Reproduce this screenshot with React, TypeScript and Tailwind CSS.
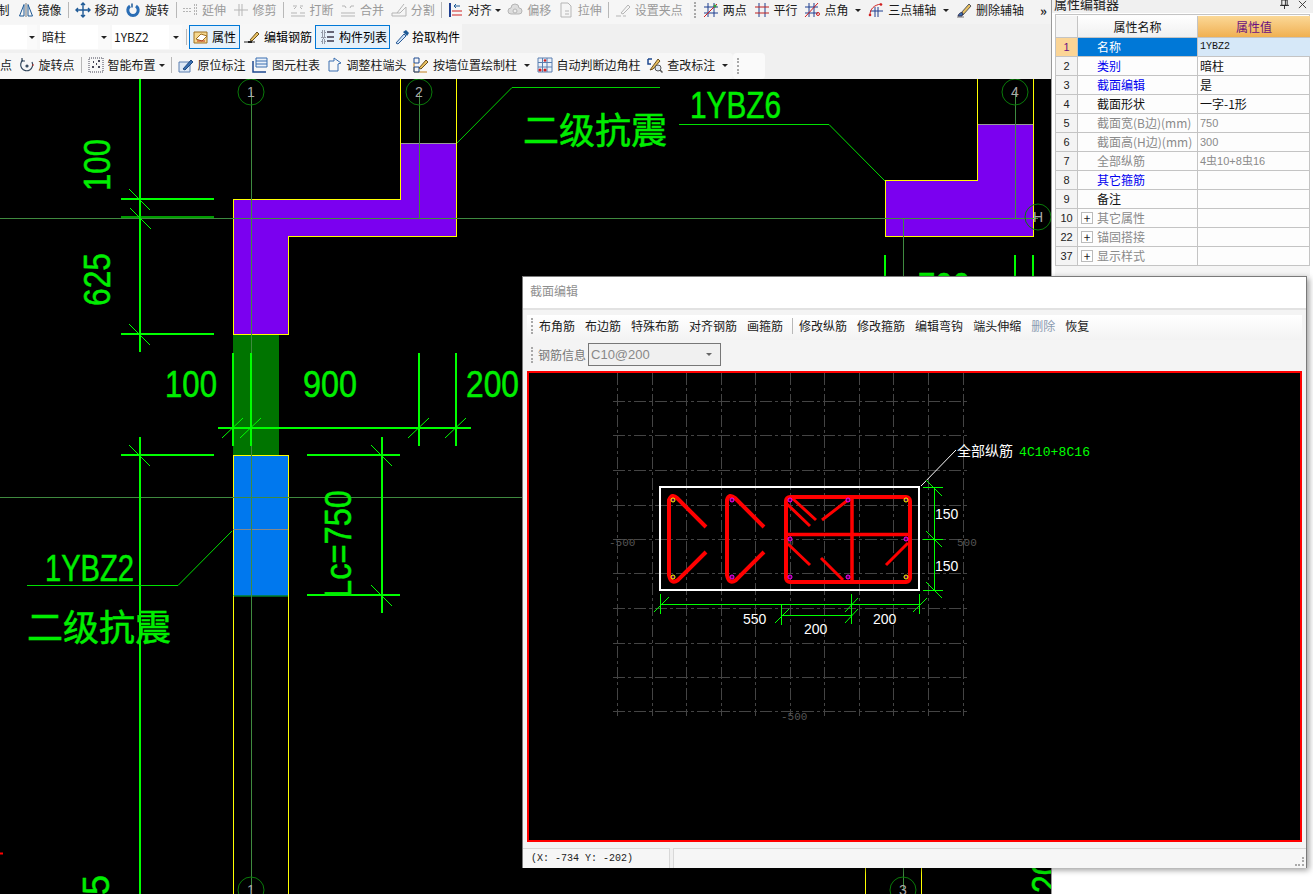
import type { JSX } from 'react'

type IconName =
    | 'mirror' | 'move' | 'rotate' | 'extend' | 'trim' | 'break' | 'merge' | 'split' | 'align'
    | 'offset' | 'stretch' | 'grip' | 'twoPoint' | 'parallel' | 'pointAngle' | 'threeAxis' | 'delAxis'
    | 'prop' | 'edit' | 'list' | 'pick' | 'rotPoint' | 'smart' | 'origin' | 'table' | 'adjust'
    | 'wall' | 'auto' | 'check'

const icons: Record<IconName, JSX.Element> = {
    mirror: <g fill="none" stroke="#1f5a96"><path d="M1.5 14 6 2.5V14zM14.5 14 10 2.5V14z" /><path d="M8 1v14" stroke="#777" /></g>,
    move: <g fill="none" stroke="#1f5a96" strokeWidth="1.4"><path d="M8 1v14M1 8h14M6 3l2-2 2 2M6 13l2 2 2-2M3 6 1 8l2 2M13 6l2 2-2 2" /></g>,
    rotate: <g fill="none" stroke="#2a6db5" strokeWidth="3"><path d="M5 4a5.2 5.2 0 1 0 6 0" /><path d="M7 1.5v4" strokeWidth="1.5" stroke="#1f5a96" /></g>,
    extend: <g fill="none" stroke="#b5b5b5"><path d="M1 6.5h9M1 9.5h9M12.5 2v12M14.5 2v12" strokeDasharray="2 1" /></g>,
    trim: <g fill="none" stroke="#b5b5b5"><path d="M1 8h14M6 2v12M9 2v12" /></g>,
    break: <g fill="none" stroke="#b5b5b5"><path d="M1 11h6M10 11h5M1 14h14M3 4h4M10 4h3M4 7l2-2M12 7l-2-2" /></g>,
    merge: <g fill="none" stroke="#b5b5b5"><path d="M1 11h14M1 14h14M2 4h3M11 4h3M6 6l-1-2M10 6l1-2" /></g>,
    split: <g fill="none" stroke="#b5b5b5"><path d="M1 14h14v-9L9 11H1zM13 2l-7 9" /></g>,
    align: <g fill="none"><path d="M2 1v14" stroke="#1f3f90" strokeWidth="2" /><path d="M4 13h10M4 9h10" stroke="#d02020" /><path d="M12 4H6M8 2 6 4l2 2" stroke="#1f5a96" /></g>,
    offset: <g fill="#ddd" stroke="#b5b5b5"><path d="M4 12a3 3 0 0 1 0-6 4 4 0 0 1 8 0 3 3 0 0 1 0 6z" /><circle cx="8" cy="9" r="2" fill="#eee" /></g>,
    stretch: <g fill="#f5f5f5" stroke="#b5b5b5"><path d="M3 1h7l3 3v11H3z" /><path d="M7 9h4M7 12h4" /></g>,
    grip: <g fill="none" stroke="#b5b5b5"><path d="M1 14h5M8 14h3M6 11l7-8 2 2-7 7z" /></g>,
    twoPoint: <g fill="none"><path d="M5 1v14M11 1v14M1 5h14M1 11h14" stroke="#1f3f90" /><path d="M1 15 14 2" stroke="#d02020" /><circle cx="12" cy="4" r="1.6" fill="#3a9a3a" /></g>,
    parallel: <g fill="none"><path d="M5 1v14M11 1v14" stroke="#1f3f90" /><path d="M1 5h14M1 11h14" stroke="#c02020" /></g>,
    pointAngle: <g fill="none"><path d="M5 1v14M10 1v14M1 5h13M1 11h13" stroke="#1f3f90" /><path d="M1 15 14 1" stroke="#d02020" /><circle cx="14" cy="12" r="1.5" stroke="#d02020" /></g>,
    threeAxis: <g fill="none"><path d="M7 5v10M10 5v10M2 9h13" stroke="#1f3f90" /><path d="M2 13C2 7 6 3 13 2" stroke="#d02020" /><circle cx="13" cy="2.5" r="1.3" fill="#d02020" /><circle cx="2" cy="13" r="1.3" fill="#d02020" /></g>,
    delAxis: <g fill="none"><path d="M1 15h7" stroke="#777" /><path d="M5 11 13 2l2 2-8 9z" fill="#e8c060" stroke="#555" /><path d="M2 14c1-3 3-4 5-3l-1 3z" fill="#3a6fb0" stroke="#335" /></g>,
    prop: <g stroke="#a07020"><path d="M1 3h13v11H1z" fill="#f5d890" /><path d="M3 10 8 5l6 2-5 5z" fill="#fff" /><path d="M4 12h8" stroke="#c03020" /></g>,
    edit: <g fill="none"><path d="M0 13h11" stroke="#222" /><path d="M6 11 13 3l2 2-7 7z" fill="#e8c060" stroke="#6a5020" /><path d="M4 13h4" stroke="#222" strokeWidth="2" /></g>,
    list: <g fill="none" stroke="#445"><path d="M2 2h3v3H2zM2 7h3v2H2zM2 11h3v3H2z" strokeDasharray="1 1" /><path d="M7 3h7M7 8h7M7 12h7" stroke="#667" strokeWidth="2" /></g>,
    pick: <g fill="none"><path d="M2 14 10 5l2 2-8 8z" fill="#cfe3f7" stroke="#2a5a96" /><path d="M9 3l4 4 2-3-3-3z" fill="#1f5a96" /></g>,
    rotPoint: <g fill="none" stroke="#34495e" strokeWidth="1.2"><path d="M4 3a6 6 0 1 0 9 2" /><path d="M3 1v3h3" /><circle cx="8" cy="9" r="1" fill="#34495e" /><path d="M13 8h2" stroke="#c03020" /></g>,
    smart: <g fill="none" stroke="#445"><path d="M1 1h14v14H1z" strokeDasharray="1 1" /><path d="M5 5h1M10 4h2M4 10h2M10 10h2M8 7h1" strokeWidth="2" /></g>,
    origin: <g fill="none"><path d="M1 5h11v10H1z" fill="#dfe9f5" stroke="#5a7fb0" /><path d="M5 12l8-9 2 2-8 8z" fill="#3a6fb0" stroke="#1f4a80" /></g>,
    table: <g fill="none"><path d="M4 1h11v9H4z" stroke="#3a6fb0" fill="#eaf1fa" /><path d="M4 4h11M4 7h11" stroke="#3a6fb0" /><path d="M1 4v11h13" stroke="#1f4a90" strokeWidth="1.5" /></g>,
    adjust: <g fill="#f7f7f7" stroke="#3a6fb0"><path d="M2 4h5V1l7 5-3 1v7H2z" /></g>,
    wall: <g fill="none"><path d="M1 1h5v5H1z" stroke="#1f4a90" /><path d="M1 6v9h13" stroke="#c08020" /><path d="M1 10h5v5H1z" stroke="#1f4a90" /><path d="M6 11l7-8 2 2-7 7z" fill="#e8c060" stroke="#6a5020" /></g>,
    auto: <g fill="#eaf1fa" stroke="#5a7fb0"><path d="M1 1h14v14H1z" /><path d="M1 5.5h14M1 10h14M5.5 1v14M10 1v14" fill="none" /><circle cx="8" cy="3.5" r="1.3" fill="#d02020" stroke="none" /><circle cx="3" cy="13" r="1.6" fill="#d02020" stroke="none" /><circle cx="8" cy="13" r="1.6" fill="#d02020" stroke="none" /></g>,
    check: <g fill="none"><path d="M1 2h4M1 2v5h3" stroke="#1f4a90" strokeWidth="1.5" /><path d="M3 13 11 2l2 2-7 8z" fill="#e8c060" stroke="#6a5020" /><circle cx="11" cy="11" r="3" fill="#dfe9f5" stroke="#555" /><path d="m13 13 2.5 2.5" stroke="#555" strokeWidth="1.5" /></g>,
}

const Ico = ({ name }: { name: IconName }) => (
    <svg viewBox="0 0 16 16" className="w-4 h-4 shrink-0">
        {icons[name]}
    </svg>
)

const Caret = ({ tight }: { tight?: boolean }) => (
    <span className={tight ? 'w-[5px] flex justify-center' : 'ml-[2px] w-[7px] flex justify-center'}>
        <span className="border-x-[3px] border-x-transparent border-t-[3px] border-t-[#222]" />
    </span>
)

interface ToolProps {
    icon?: IconName
    label: string
    caret?: 'tight' | 'wide'
    disabled?: boolean
}

const Tool = ({ icon, label, caret, disabled }: ToolProps) => (
    <div className={`flex items-center gap-1 shrink-0 ${disabled ? 'text-[#9a9a9a]' : 'text-[#1a1a1a]'}`}>
        {icon && <Ico name={icon} />}
        <span>{label}</span>
        {caret && <Caret tight={caret === 'tight'} />}
    </div>
)

const Sep = () => <div className="w-px h-[16px] bg-[#b8b8b8] -mr-px shrink-0" />

const Grip = () => (
    <div className="w-[2px] h-[16px] shrink-0 border-l-2 border-dotted border-l-[#a8a8a8]" />
)

const rowOneLeft: (ToolProps | 'sep')[] = [
    { icon: 'mirror', label: '镜像' },
    'sep',
    { icon: 'move', label: '移动' },
    { icon: 'rotate', label: '旋转' },
    'sep',
    { icon: 'extend', label: '延伸', disabled: true },
    { icon: 'trim', label: '修剪', disabled: true },
    'sep',
    { icon: 'break', label: '打断', disabled: true },
    { icon: 'merge', label: '合并', disabled: true },
    { icon: 'split', label: '分割', disabled: true },
    'sep',
    { icon: 'align', label: '对齐', caret: 'tight' },
    { icon: 'offset', label: '偏移', disabled: true },
    { icon: 'stretch', label: '拉伸', disabled: true },
    'sep',
    { icon: 'grip', label: '设置夹点', disabled: true },
]

const rowOneRight: ToolProps[] = [
    { icon: 'twoPoint', label: '两点' },
    { icon: 'parallel', label: '平行' },
    { icon: 'pointAngle', label: '点角', caret: 'wide' },
    { icon: 'threeAxis', label: '三点辅轴', caret: 'wide' },
    { icon: 'delAxis', label: '删除辅轴' },
]

const rowThree: (ToolProps | 'sep')[] = [
    { label: '点' },
    { icon: 'rotPoint', label: '旋转点' },
    'sep',
    { icon: 'smart', label: '智能布置', caret: 'tight' },
    'sep',
    { icon: 'origin', label: '原位标注' },
    { icon: 'table', label: '图元柱表' },
    { icon: 'adjust', label: '调整柱端头' },
    { icon: 'wall', label: '按墙位置绘制柱', caret: 'wide' },
    { icon: 'auto', label: '自动判断边角柱' },
    { icon: 'check', label: '查改标注', caret: 'wide' },
]

const Combo = ({ text, field, width }: { text: string; field: string; width: string }) => (
    <div className={`flex h-[24px] shrink-0 ${width}`}>
        <div className={`${field} bg-white pl-[2px] flex items-center text-[#1a1a1a]`}>{text}</div>
        <div className="flex-1 bg-[#fafafa] flex items-center justify-center">
            <span className="border-x-[3px] border-x-transparent border-t-[3px] border-t-[#222]" />
        </div>
    </div>
)

const Toolbars = () => (
    <div className="bg-[#f0f0f0] text-[12px] leading-none shrink-0">
        <div className="h-[24px] flex items-center overflow-hidden">
            <div className="w-[690px] h-full pb-[4px] bg-[#f6f6f6] flex items-center gap-[6.5px] shrink-0">
                <span className="-ml-[2.5px] mr-[1.5px] text-[#1a1a1a]">制</span>
                {rowOneLeft.map((item, idx) =>
                    item === 'sep' ? <Sep key={idx} /> : <Tool key={idx} {...item} />,
                )}
            </div>
            <div className="flex-1 h-full pb-[4px] flex items-center gap-[6.8px] pl-[4px] bg-[#f3f3f3]">
                <Grip />
                {rowOneRight.map((item) => (
                    <Tool key={item.label} {...item} />
                ))}
                <span className="ml-auto mr-[4px] text-[13px] font-bold text-[#222]">»</span>
            </div>
        </div>
        <div className="h-[28px] pb-[2px] flex items-center">
            <div className="w-[462px] h-full bg-[#f7f7f7] flex items-center">
                <Combo text="" field="w-[27px]" width="w-[37px]" />
                <div className="w-[3px]" />
                <Combo text="暗柱" field="w-[58px]" width="w-[70px]" />
                <div className="w-[2px]" />
                <Combo text="1YBZ2" field="w-[57px]" width="w-[70px]" />
                <div className="w-px h-[16px] bg-[#b8b8b8] ml-[4px] mr-[2px]" />
                <div className="w-[51px] h-[24px] border border-[#0078d7] bg-[#e5f1fb] flex items-center gap-[3px] pl-[3px]">
                    <Ico name="prop" />
                    <span>属性</span>
                </div>
                <div className="ml-[4px] w-[68px] flex items-center gap-[4px]">
                    <Ico name="edit" />
                    <span>编辑钢筋</span>
                </div>
                <div className="ml-[3px] w-[75px] h-[24px] border border-[#0078d7] bg-[#e5f1fb] flex items-center gap-[3px] pl-[4px]">
                    <Ico name="list" />
                    <span>构件列表</span>
                </div>
                <div className="ml-[4px] flex items-center gap-[2px]">
                    <Ico name="pick" />
                    <span>拾取构件</span>
                </div>
            </div>
        </div>
        <div className="h-[27px] pt-px flex items-center">
            <div className="w-[733px] h-full pb-[2px] bg-[#f7f7f7] flex items-center gap-[6.5px] overflow-hidden shrink-0 rounded-r-sm">
                {rowThree.map((item, idx) =>
                    item === 'sep' ? <Sep key={idx} /> : <Tool key={idx} {...item} />,
                )}
            </div>
            <div className="w-[32px] h-full bg-[#fafafa] flex items-center pl-[4px] rounded-sm">
                <Grip />
            </div>
        </div>
    </div>
)

const GREEN = '#00ee00'
const AXIS = '#3f8a3f'

const Bubble = ({ x, y, label }: { x: number; y: number; label: string }) => (
    <g>
        <circle cx={x} cy={y} r={13} fill="none" stroke="#0a7a0a" />
        <text x={x} y={y + 5} fontSize={14} fill="#aaaaaa" textAnchor="middle" style={{ fontFamily: 'Liberation Sans' }}>{label}</text>
    </g>
)

const Thick = ({ d }: { d: string }) => <path d={d} stroke="#00ff00" strokeWidth={2} fill="none" shapeRendering="crispEdges" />

const Slash = ({ x, y, up }: { x: number; y: number; up?: boolean }) => (
    <path
        d={up ? `M${x - 11} ${y + 10}L${x + 10} ${y - 10}` : `M${x - 11} ${y - 10}L${x + 10} ${y + 11}`}
        stroke="#00ff00"
        fill="none"
    />
)

const DimText = ({ x, y, w, rotate, children }: { x: number; y: number; w: number; rotate?: boolean; children: string }) => (
    <text
        transform={`translate(${x} ${y})${rotate ? ' rotate(-90)' : ''}`}
        fontSize={36}
        fill={GREEN}
        stroke={GREEN}
        strokeWidth={0.5}
        textLength={w}
        lengthAdjust="spacingAndGlyphs"
        style={{ fontFamily: 'Liberation Sans' }}
    >
        {children}
    </text>
)

const MainCanvas = () => (
    <svg viewBox="0 79 1051 815" className="flex-1 block w-[1051px] bg-black min-h-0">
        <path d="M233 335h46v120h-46z" fill="#007400" />
        <path d="M233.500 199.500H400.500V143.500H456.500V236.500H288.500V334.500H233.500Z" fill="#7b00f0" stroke="#ffff00" shapeRendering="crispEdges" />
        <path d="M885.500 180.500H977.500V124.500H1033.500V236.500H885.500Z" fill="#7b00f0" stroke="#ffff00" shapeRendering="crispEdges" />
        <path d="M401 143.500h55M978 124.500h55" stroke="#999" shapeRendering="crispEdges" />
        <path d="M400.500 79v64M456.500 79v64M977.500 79v45M1033.500 79v45" stroke="#ffff00" shapeRendering="crispEdges" />
        <path d="M233 455.500h55V595.500h-55z" fill="#0078ee" />
        <path d="M233.500 596V455.500H288.500V596" stroke="#ffff00" fill="none" shapeRendering="crispEdges" />
        <path d="M233 596h55" stroke="#00c040" />
        <path d="M233.500 596V894M288.500 596V894M865.500 868V894M921.500 868V894" stroke="#ffff00" shapeRendering="crispEdges" />
        <path d="M233 529.500h55" stroke="#888" />

        <path d="M0 218.500H1038M0 497.500H522M251.500 92V890M419.500 92V218M1015.500 92V218M903.500 218V276M903.500 868V890" stroke={AXIS} shapeRendering="crispEdges" />

        <Bubble x={251} y={92} label="1" />
        <Bubble x={419} y={92} label="2" />
        <Bubble x={1015} y={92} label="4" />
        <Bubble x={1038} y={217} label="H" />
        <Bubble x={251} y={890} label="1" />
        <Bubble x={903} y={890} label="3" />

        <Thick d="M140 79V352M121 199H214M121 334H214M140 437V894M121 455H214M307 455H400M307 595H400M382 437V613" />
        <path d="M121 217H214" stroke="#00d000" strokeWidth={1.5} />
        <Thick d="M233 353V446M251 353V446M419 353V446M456 353V446M218 428H471M885 255V276M1015 255V276M1033 255V276" />
        <Slash x={140} y={199} />
        <Slash x={141} y={218} />
        <Slash x={140} y={334} />
        <Slash x={140} y={455} />
        <Slash x={382} y={455} />
        <Slash x={382} y={595} />
        <Slash x={233} y={428} up />
        <Slash x={251} y={428} up />
        <Slash x={419} y={428} up />
        <Slash x={456} y={428} up />

        <DimText x={110} y={191} w={52} rotate>100</DimText>
        <DimText x={110} y={306} w={53} rotate>625</DimText>
        <DimText x={165} y={397} w={52}>100</DimText>
        <DimText x={303} y={397} w={54}>900</DimText>
        <DimText x={466} y={397} w={53}>200</DimText>
        <DimText x={918} y={299} w={52}>700</DimText>
        <DimText x={351} y={598} w={108} rotate>Lc=750</DimText>
        <DimText x={109} y={895} w={20} rotate>5</DimText>
        <DimText x={1058} y={893} w={53} rotate>200</DimText>
        <DimText x={690} y={118} w={91}>1YBZ6</DimText>
        <DimText x={45} y={581} w={89}>1YBZ2</DimText>
        <text x={523} y={144} fontSize={36} fill={GREEN} stroke={GREEN} strokeWidth={0.5}>二级抗震</text>
        <text x={27} y={641} fontSize={36} fill={GREEN} stroke={GREEN} strokeWidth={0.5}>二级抗震</text>
        <path d="M457 143 512 87.500H660" stroke="#00d000" fill="none" />
        <path d="M679 124.500H829L885 181" stroke="#00e000" fill="none" />
        <path d="M27 585.500H178L232 531" stroke="#00e000" fill="none" />
        <path d="M0 853.500H3" stroke="#ff0000" strokeWidth={2} />
    </svg>
)

const SecText = ({ x, y, children, fill = '#ffffff' }: { x: number; y: number; children: string; fill?: string }) => (
    <text x={x} y={y} fontSize={14} fill={fill} style={{ fontFamily: 'Liberation Sans' }}>{children}</text>
)

const gridXs = [617, 652, 686, 721, 755, 790, 824, 859, 893, 928, 963]
const gridYs = [400, 434, 469, 504, 538, 572, 607, 642, 676, 710]
const rebarDots = [
    [673, 499, '#ffff00'], [673, 576, '#ffff00'], [732, 499, '#ff00ff'], [732, 576, '#ff00ff'],
    [790, 499, '#ff00ff'], [848, 499, '#ff00ff'], [906, 499, '#ffff00'], [790, 538, '#ff00ff'],
    [906, 538, '#ff00ff'], [790, 576, '#ff00ff'], [848, 576, '#ff00ff'], [906, 576, '#ffff00'],
] as [number, number, string][]

const SectionCanvas = () => (
    <svg viewBox="529 372 771 467" className="block w-full h-full bg-black">
        {gridXs.map((x) => (
            <path key={x} d={`M${x + 0.5} 372V715`} stroke="#444444" strokeDasharray="12 3 3 3" shapeRendering="crispEdges" />
        ))}
        {gridYs.map((y) => (
            <path key={y} d={`M613 ${y + 0.5}H968`} stroke="#444444" strokeDasharray="12 3 3 3" shapeRendering="crispEdges" />
        ))}
        <text x={609} y={545} fontSize={11} fill="#555" style={{ fontFamily: 'Liberation Mono' }}>-500</text>
        <text x={957} y={545} fontSize={11} fill="#555" style={{ fontFamily: 'Liberation Mono' }}>500</text>
        <text x={781} y={719} fontSize={11} fill="#555" style={{ fontFamily: 'Liberation Mono' }}>-500</text>
        <text x={787} y={545} fontSize={11} fill="#555" style={{ fontFamily: 'Liberation Mono' }}>0</text>

        <path d="M660 486H919V589H660Z" fill="none" stroke="#ffffff" strokeWidth={2} shapeRendering="crispEdges" />
        <path d="M921 485 956 449" stroke="#ffffff" fill="none" />
        <text x={957} y={455} fontSize={14} fill="#ffffff">全部纵筋</text>
        <text x={1019} y={455} fontSize={13} fill="#00ff00" textLength={71} style={{ fontFamily: 'Liberation Mono' }}>4C10+8C16</text>

        <g fill="none" stroke="#ff0000" strokeLinecap="butt">
            <path d="M706 526 677 497Q672 492 669 499V574Q671 584 678 579L706 551" strokeWidth={4} />
            <path d="M764 526 735 497Q729 492 727 499V574Q729 584 736 579L764 551" strokeWidth={4} />
            <rect x={786} y={496} width={124} height={85} rx={4} strokeWidth={4} />
            <path d="M852 496V581M786 533.500H910" strokeWidth={3.500} />
            <path d="M792 497 816 519M787 503 810 525M848 499 822 519M788 543 810 564M821 557 843 579M908 542 886 564" strokeWidth={3} />
        </g>
        {rebarDots.map(([x, y, color]) => (
            <circle key={`${x}-${y}`} cx={x} cy={y} r={2} fill="#500050" stroke={color} />
        ))}

        <g stroke="#00ff00" fill="none" shapeRendering="crispEdges">
            <path d="M934 486V589M923 486.500H943M923 538.500H943M923 589.500H943" />
            <path d="M660 603.500H919M781 614.500H851M660.500 593V613M851.500 593V623M919.500 593V613M781.500 604V624" />
        </g>
        <g stroke="#00ff00" fill="none">
            <path d="M926 479 942 495M926 530 942 546M926 581 942 597" />
            <path d="M654 611 669 596M775 622 789 608M845 611 858 597M845 622 858 608M913 611 927 597" />
        </g>
        <SecText x={935} y={518}>150</SecText>
        <SecText x={935} y={570}>150</SecText>
        <SecText x={743} y={623}>550</SecText>
        <SecText x={804} y={633}>200</SecText>
        <SecText x={873} y={623}>200</SecText>
    </svg>
)

const dialogTools = [
    ['布角筋', '布边筋', '特殊布筋', '对齐钢筋', '画箍筋'],
    ['修改纵筋', '修改箍筋', '编辑弯钩', '端头伸缩', '删除', '恢复'],
]

const SectionDialog = () => (
    <div className="absolute left-[522px] top-[276px] w-[785px] h-[592px] bg-white border border-[#7a7a7a] shadow-[2px_2px_6px_rgba(0,0,0,0.4)] flex flex-col text-[12px] leading-none">
        <div className="h-[31px] pb-[3px] shrink-0 flex items-center pl-[7px] text-[#8f8f8f]">截面编辑</div>
        <div className="flex-1 min-h-0 flex flex-col border-t-2 border-t-[#e2e2e2] px-[4px] bg-[#f4f4f4]">
            <div className="h-[30px] shrink-0 flex items-end">
                <div className="w-full h-[25px] pb-[4px] bg-gradient-to-b from-white to-[#f3f3f3] flex items-center gap-[10px] pl-[4px]">
                    <div className="w-[2px] h-[16px] border-l-2 border-dotted border-l-[#a8a8a8] mr-[-4px]" />
                    {dialogTools[0].map((label) => (
                        <span key={label} className="text-[#1a1a1a] shrink-0">{label}</span>
                    ))}
                    <div className="w-px h-[16px] bg-[#b8b8b8] -ml-px -mr-[4px]" />
                    {dialogTools[1].map((label) => (
                        <span key={label} className={label === '删除' ? 'text-[#8a9ab0] shrink-0' : 'text-[#1a1a1a] shrink-0'}>{label}</span>
                    ))}
                </div>
            </div>
            <div className="h-[31px] pb-[2px] shrink-0 flex items-center gap-[5px] pl-[4px]">
                <div className="w-[2px] h-[16px] border-l-2 border-dotted border-l-[#a8a8a8]" />
                <span className="text-[#777777] -mr-[3px]">钢筋信息</span>
                <div className="w-[133px] h-[23px] border border-[#777] bg-[#f0f0f0] flex items-center justify-between pl-[2px] pr-[8px] text-[13px] text-[#888] font-['Liberation_Sans']">
                    <span>C10@200</span>
                    <span className="border-x-[3px] border-x-transparent border-t-[3px] border-t-[#666]" />
                </div>
            </div>
            <div className="flex-1 min-h-0 border-2 border-[#ff0000]">
                <SectionCanvas />
            </div>
            <div className="h-[6px] shrink-0" />
        </div>
        <div className="h-[20px] shrink-0 -mb-px flex gap-[3px] bg-[#f0f0f0]">
            <div className="w-[147px] bg-[#f6f6f6] border-t border-r border-[#d8d8d8] flex items-center pl-[8px] text-[10px] text-[#222] font-['Liberation_Mono']">
                (X: -734 Y: -202)
            </div>
            <div className="flex-1 bg-[#f6f6f6] border-t border-l border-[#d8d8d8] flex justify-end items-end pr-[2px] pb-[2px]">
                <div className="w-[9px] h-[9px] border-r-2 border-b-2 border-dotted border-[#aaa]" />
            </div>
        </div>
    </div>
)

interface PropRow {
    no: number
    name: string
    value?: string
    tone: 'black' | 'blue' | 'gray'
    plus?: boolean
}

const propRows: PropRow[] = [
    { no: 1, name: '名称', value: '1YBZ2', tone: 'black' },
    { no: 2, name: '类别', value: '暗柱', tone: 'blue' },
    { no: 3, name: '截面编辑', value: '是', tone: 'blue' },
    { no: 4, name: '截面形状', value: '一字-1形', tone: 'black' },
    { no: 5, name: '截面宽(B边)(mm)', value: '750', tone: 'gray' },
    { no: 6, name: '截面高(H边)(mm)', value: '300', tone: 'gray' },
    { no: 7, name: '全部纵筋', value: '4虫10+8虫16', tone: 'gray' },
    { no: 8, name: '其它箍筋', tone: 'blue' },
    { no: 9, name: '备注', tone: 'black' },
    { no: 10, name: '其它属性', tone: 'gray', plus: true },
    { no: 22, name: '锚固搭接', tone: 'gray', plus: true },
    { no: 37, name: '显示样式', tone: 'gray', plus: true },
]

const toneClass = { black: 'text-[#111]', blue: 'text-[#0000f0]', gray: 'text-[#8a8a8a]' }

const PropertyRow = ({ row }: { row: PropRow }) => {
    const active = row.no === 1
    return (
        <div className="grid grid-cols-[22px_120px_112px] h-[19px] border-b border-[#c4c4c4]">
            <div className={`flex items-center justify-center border-r border-[#c4c4c4] text-[11px] font-['Liberation_Sans'] ${active ? 'bg-[#fbd596] text-[#6a1080]' : 'bg-[#f4f4f4] text-[#222]'}`}>
                {row.no}
            </div>
            <div className={`relative flex items-center pl-[19px] border-r border-[#c4c4c4] ${active ? 'bg-[#0078d7] text-white' : toneClass[row.tone]}`}>
                {row.plus && (
                    <span className="absolute left-[3px] top-[3px] w-[12px] h-[12px] border border-[#bbb] bg-white flex items-center justify-center text-[12px] leading-none text-[#222]">+</span>
                )}
                {row.name}
            </div>
            <div className={`flex items-center pl-[2px] ${active ? "bg-[#d6e8f8] text-[#111] font-['Liberation_Mono','Noto_Sans_CJK_SC',monospace] text-[10px]" : row.no >= 5 && row.no <= 7 ? "text-[#8a8a8a] text-[11px] font-['Liberation_Sans','Noto_Sans_CJK_SC',sans-serif]" : 'text-[#111]'}`}>
                {row.value}
            </div>
        </div>
    )
}

const PropertyPanel = () => (
    <div className="w-[262px] shrink-0 h-full bg-white border-l border-l-[#9a9a9a] text-[12px] leading-none">
        <div className="h-[13px] bg-[#f0f0f0] overflow-hidden flex items-start pl-[2px] pr-[6px] justify-between">
            <span className="text-[13px] text-[#222] -mt-[3px]">属性编辑器</span>
            <div className="flex items-center gap-[9px] text-[#333]">
                <svg viewBox="0 0 10 10" className="w-[9px] h-[9px]">
                    <path d="M2 0h6v6H2zM0 6h10M5 6v4M6 0v6" stroke="#222" fill="none" />
                </svg>
                <svg viewBox="0 0 10 10" className="w-[9px] h-[9px]">
                    <path d="m1 1 8 8M9 1 1 9" stroke="#333" fill="none" />
                </svg>
            </div>
        </div>
        <div className="ml-[3px] mt-px w-[255px] border-t border-x border-[#c4c4c4] bg-[#fdfdfd]">
            <div className="grid grid-cols-[22px_120px_112px] h-[23px] border-b border-[#c4c4c4] pt-[1px]">
                <div className="bg-[#f4f4f4] border-r border-[#c4c4c4]" />
                <div className="bg-gradient-to-b from-white to-[#f0f0f0] border-r border-[#c4c4c4] flex items-center justify-center text-[#111]">属性名称</div>
                <div className="bg-gradient-to-b from-[#fbd896] to-[#f0b050] flex items-center justify-center text-[#6a1080]">属性值</div>
            </div>
            {propRows.map((row) => (
                <PropertyRow key={row.no} row={row} />
            ))}
        </div>
        <div className="h-[10px] bg-[#f5f5f5] ml-[3px] w-[255px]" />
    </div>
)

export default function App() {
    return (
        <div className="relative flex w-[1313px] h-[894px] overflow-hidden bg-white font-['Noto_Sans_CJK_SC','Liberation_Sans',sans-serif]">
            <div className="w-[1051px] shrink-0 h-full flex flex-col">
                <Toolbars />
                <MainCanvas />
            </div>
            <PropertyPanel />
            <SectionDialog />
        </div>
    )
}
